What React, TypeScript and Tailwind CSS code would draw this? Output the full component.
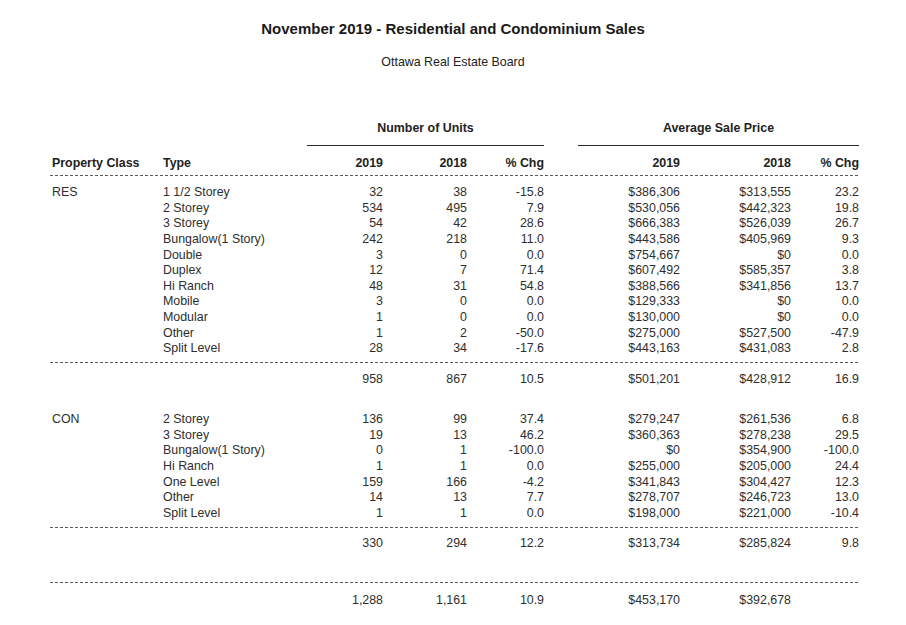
import React from "react";

type Row = [string, string, string, string, string, string, string];

const res: Row[] = [
  ["1 1/2 Storey", "32", "38", "-15.8", "$386,306", "$313,555", "23.2"],
  ["2 Storey", "534", "495", "7.9", "$530,056", "$442,323", "19.8"],
  ["3 Storey", "54", "42", "28.6", "$666,383", "$526,039", "26.7"],
  ["Bungalow(1 Story)", "242", "218", "11.0", "$443,586", "$405,969", "9.3"],
  ["Double", "3", "0", "0.0", "$754,667", "$0", "0.0"],
  ["Duplex", "12", "7", "71.4", "$607,492", "$585,357", "3.8"],
  ["Hi Ranch", "48", "31", "54.8", "$388,566", "$341,856", "13.7"],
  ["Mobile", "3", "0", "0.0", "$129,333", "$0", "0.0"],
  ["Modular", "1", "0", "0.0", "$130,000", "$0", "0.0"],
  ["Other", "1", "2", "-50.0", "$275,000", "$527,500", "-47.9"],
  ["Split Level", "28", "34", "-17.6", "$443,163", "$431,083", "2.8"],
];

const con: Row[] = [
  ["2 Storey", "136", "99", "37.4", "$279,247", "$261,536", "6.8"],
  ["3 Storey", "19", "13", "46.2", "$360,363", "$278,238", "29.5"],
  ["Bungalow(1 Story)", "0", "1", "-100.0", "$0", "$354,900", "-100.0"],
  ["Hi Ranch", "1", "1", "0.0", "$255,000", "$205,000", "24.4"],
  ["One Level", "159", "166", "-4.2", "$341,843", "$304,427", "12.3"],
  ["Other", "14", "13", "7.7", "$278,707", "$246,723", "13.0"],
  ["Split Level", "1", "1", "0.0", "$198,000", "$221,000", "-10.4"],
];

const GRID =
  "grid grid-cols-[111px_150px_70px_84px_77px_136px_111px_68px] items-center";

function Dashed() {
  return (
    <div className="ml-[-2px] w-[809px] h-px bg-[repeating-linear-gradient(to_right,#5a5a5a_0px,#5a5a5a_3px,transparent_3px,transparent_5px)]" />
  );
}

function DataRow({
  cls,
  row,
  h,
}: {
  cls: string;
  row: Row;
  h: string;
}) {
  return (
    <div className={`${GRID} ${h}`}>
      <div>{cls}</div>
      <div>{row[0]}</div>
      <div className="text-right">{row[1]}</div>
      <div className="text-right">{row[2]}</div>
      <div className="text-right">{row[3]}</div>
      <div className="text-right">{row[4]}</div>
      <div className="text-right">{row[5]}</div>
      <div className="text-right">{row[6]}</div>
    </div>
  );
}

export default function App() {
  return (
    <div
      className="w-[906px] h-[625px] bg-white text-[#2e2e2e] text-[12.4px] leading-[15px] overflow-hidden"
      style={{ fontFamily: '"Liberation Sans", Arial, sans-serif' }}
    >
      <div className="pt-[20px] text-center text-[15px] leading-[18px] font-bold text-[#1a1a1a]">
        November 2019 - Residential and Condominium Sales
      </div>
      <div className="mt-[17px] text-center text-[12.4px] leading-[15px] text-[#222]">
        Ottawa Real Estate Board
      </div>

      <div className="ml-[52px] w-[807px]">
        {/* group headers */}
        <div className="mt-[51px] flex">
          <div className="ml-[255px] w-[237px] flex flex-col">
            <div className="text-center font-bold text-[#222] h-[15px]">
              Number of Units
            </div>
            <div className="mt-[9px] h-px bg-[#2a2a2a]" />
          </div>
          <div className="ml-[34px] w-[281px] flex flex-col">
            <div className="text-center font-bold text-[#222] h-[15px]">
              Average Sale Price
            </div>
            <div className="mt-[9px] h-px bg-[#2a2a2a]" />
          </div>
        </div>

        {/* column headers */}
        <div className={`${GRID} mt-[10px] h-[15px] font-bold text-[#222]`}>
          <div>Property Class</div>
          <div>Type</div>
          <div className="text-right">2019</div>
          <div className="text-right">2018</div>
          <div className="text-right">% Chg</div>
          <div className="text-right">2019</div>
          <div className="text-right">2018</div>
          <div className="text-right">% Chg</div>
        </div>
        <div className="mt-[4px]">
          <Dashed />
        </div>

        {/* RES */}
        <div className="mt-[9px] flex flex-col">
          {res.map((r, i) => (
            <DataRow key={i} cls={i === 0 ? "RES" : ""} row={r} h="h-[15.6px]" />
          ))}
        </div>
        <div className="mt-[5px]">
          <Dashed />
        </div>
        <div className="mt-[9.5px]">
          <DataRow
            cls=""
            row={["", "958", "867", "10.5", "$501,201", "$428,912", "16.9"]}
            h="h-[15.6px]"
          />
        </div>

        {/* CON */}
        <div className="mt-[24px] flex flex-col">
          {con.map((r, i) => (
            <DataRow key={i} cls={i === 0 ? "CON" : ""} row={r} h="h-[15.7px]" />
          ))}
        </div>
        <div className="mt-[5.5px]">
          <Dashed />
        </div>
        <div className="mt-[8px]">
          <DataRow
            cls=""
            row={["", "330", "294", "12.2", "$313,734", "$285,824", "9.8"]}
            h="h-[15.6px]"
          />
        </div>

        <div className="mt-[30.5px]">
          <Dashed />
        </div>
        <div className="mt-[9.5px]">
          <DataRow
            cls=""
            row={["", "1,288", "1,161", "10.9", "$453,170", "$392,678", ""]}
            h="h-[15.6px]"
          />
        </div>
      </div>
    </div>
  );
}
